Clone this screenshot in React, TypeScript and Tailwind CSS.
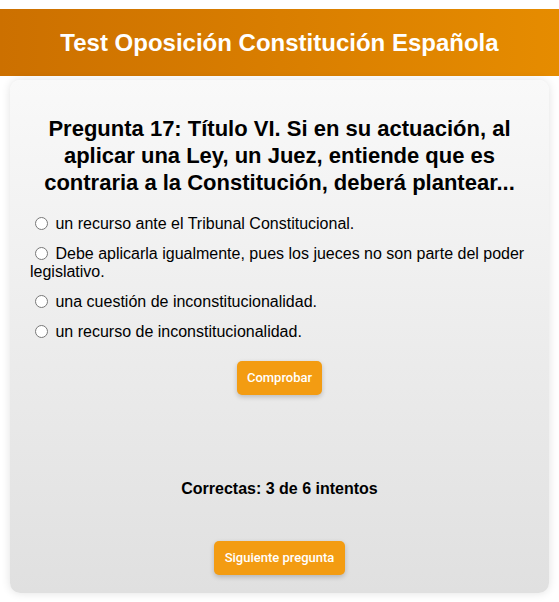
const options = [
  'un recurso ante el Tribunal Constitucional.',
  'Debe aplicarla igualmente, pues los jueces no son parte del poder legislativo.',
  'una cuestión de inconstitucionalidad.',
  'un recurso de inconstitucionalidad.',
]

export default function App() {
  return (
    <div className="min-h-[602px] bg-white pt-[9px] font-['Liberation_Sans',Arial,sans-serif] text-black">
      <header className="flex h-[67px] items-center justify-center bg-gradient-to-r from-[#cc7000] to-[#e68c00]">
        <h1 className="text-[24px] font-bold text-white">Test Oposición Constitución Española</h1>
      </header>

      <main className="mx-[10px] mt-[4px] h-[513px] rounded-[10px] bg-gradient-to-b from-[#f9f9f9] to-[#e0e0e0] px-5 pt-[35px] shadow-[0_0_10px_rgba(0,0,0,0.12)]">
        <h2 className="text-center text-[22px] font-bold leading-[27px]">
          Pregunta 17: Título VI. Si en su actuación, al aplicar una Ley, un Juez, entiende que es contraria a la
          Constitución, deberá plantear...
        </h2>

        <div className="mt-[18px] flex flex-col gap-[11px] text-[16px] leading-[18px]">
          {options.map((o, i) => (
            <div key={i}>
              <input
                type="radio"
                name="respuesta"
                id={`op${i}`}
                className="mt-[3px] mr-[3px] ml-[5px] h-[13px] w-[13px] align-[-1px]"
              />{' '}
              <label htmlFor={`op${i}`}>{o}</label>
            </div>
          ))}
        </div>

        <div className="mt-[20px] flex justify-center">
          <button className="h-[34px] rounded-[5px] bg-[#f39c12] px-[10px] font-['Roboto',Arial,sans-serif] text-[13px] font-medium text-white shadow-[0_2px_5px_rgba(0,0,0,0.2)]">
            Comprobar
          </button>
        </div>

        <p className="mt-[82px] text-center text-[16px] font-bold">Correctas: 3 de 6 intentos</p>

        <div className="mt-[40px] flex justify-center">
          <button className="h-[34px] rounded-[5px] bg-[#f39c12] px-[11px] font-['Roboto',Arial,sans-serif] text-[13px] font-medium text-white shadow-[0_2px_5px_rgba(0,0,0,0.2)]">
            Siguiente pregunta
          </button>
        </div>
      </main>
    </div>
  )
}
